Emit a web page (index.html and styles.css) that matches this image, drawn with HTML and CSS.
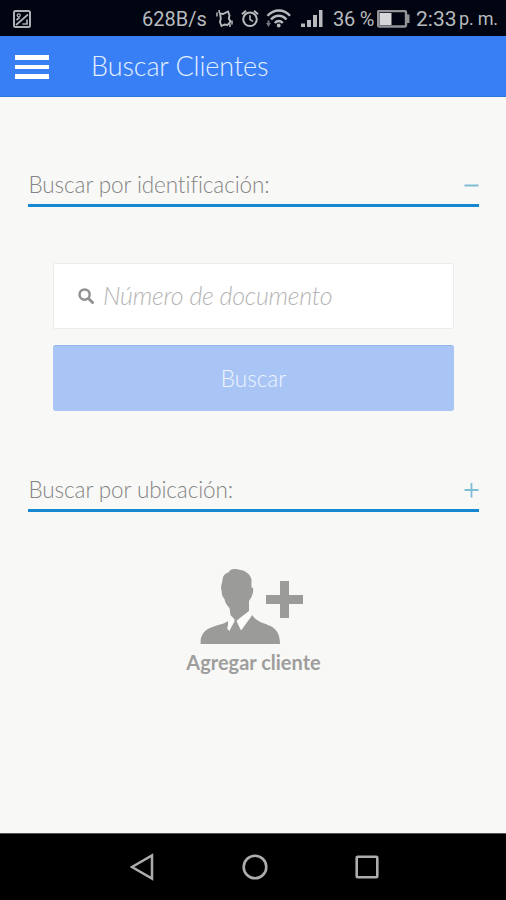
FILE: index.html
```
<!DOCTYPE html>
<html lang="es">
<head>
<meta charset="utf-8">
<title>Buscar Clientes</title>
<link rel="stylesheet" href="styles.css">
</head>
<body>
<div class="status">
  <svg class="shot" width="18" height="18" viewBox="0 0 18 18" fill="none" stroke="#aeb0b3" stroke-width="2"><rect x="1" y="1" width="16" height="16" rx="1.5"/><path d="M3 15 15 4.5M3.5 10l3-2.5M9.5 14H14V9.5" stroke-width="1.7"/><circle cx="5.7" cy="5.3" r="1.5" stroke-width="1.3"/></svg>
  <span class="speed">628B/s</span>
  <svg class="vibrate" width="17" height="19" viewBox="0 0 17 19" fill="none" stroke="#b8babd" stroke-width="1.9"><path d="M4 4.500 7 5l5-2.500 1.500 4-.7 3 1.700 3-3 3.500-3-.5-3 1.500-1.500-4 .8-3.500z"/><path d="M1 3.5v4M3.200 1v3M14 14.500v3.500M16 11.5v4" stroke-width="1.5"/></svg>
  <svg class="alarm" width="18" height="19" viewBox="0 0 18 19" fill="none" stroke="#b8babd" stroke-width="2"><circle cx="9" cy="10.3" r="6.8"/><path d="M1 5.2 5 1.8M17 5.2l-4-3.4"/><path d="M9 6.2v4.4l3 1.8" stroke-width="1.6"/></svg>
  <svg class="wifi" width="25" height="19" viewBox="0 0 25 19" fill="none" stroke="#b8babd" stroke-width="2.4"><path d="M1.5 6.8C8-.2 18-.2 24 6.8M5 10.5c4.5-5 11-5 15.5 0M8.8 14c2.4-2.7 5.6-2.7 8 0"/><circle cx="12.7" cy="16.5" r="1.9" fill="#b8babd" stroke="none"/><path d="M0 14h5l-2.5 4z" fill="#75777a" stroke="none"/><path d="M2.5 11.5V15" stroke="#75777a" stroke-width="2"/></svg>
  <svg class="signal" width="22" height="18" viewBox="0 0 22 18" fill="#b8babd"><path d="M0 13.5h4V17H0zM6 10h4v7H6zM12 5h4v12h-4zM18 0h3.5v17H18z"/></svg>
  <span class="percent">36 %</span>
  <svg class="battery" width="33" height="18" viewBox="0 0 33 18"><rect x="1" y="1" width="28" height="15.5" rx="1.5" fill="none" stroke="#929496" stroke-width="2.4"/><path d="M30 4.5h2.5v8.5H30z" fill="#929496"/><path d="M2.5 3h12v12h-12z" fill="#d5d6d7"/></svg>
  <span class="time">2:33</span><span class="ampm">p. m.</span>
</div>
<header class="header">
  <div class="menu"><i></i><i></i><i></i></div>
  <h1>Buscar Clientes</h1>
</header>
<main class="content">
  <div class="section">
    <span class="label-id">Buscar por identificación:</span>
    <svg class="toggle" width="15" height="16" viewBox="0 0 15 16" stroke="#7fbdd5" stroke-width="2"><path d="M.5 8.500h14"/></svg>
  </div>
  <div class="form">
    <div class="field">
      <svg width="16" height="16" viewBox="0 0 16 16" fill="none" stroke="#929292"><circle cx="6.6" cy="6.6" r="5.1" stroke-width="2.5"/><path d="m10.5 10.5 4 4" stroke-width="3" stroke-linecap="round"/></svg>
      <span class="placeholder">Número de documento</span>
    </div>
    <div class="button"><span>Buscar</span></div>
  </div>
  <div class="section">
    <span class="label-loc">Buscar por ubicación:</span>
    <svg class="toggle" width="15" height="16" viewBox="0 0 15 16" stroke="#7fbdd5" stroke-width="1.8"><path d="M.5 8h14M7.5 1v14.5"/></svg>
  </div>
  <div class="add">
    <svg width="104" height="77" viewBox="0 0 104 77" fill="#9b9b9a"><path d="M22 15 23 9c2-4 4-4 6-5 1-3 4-3 7-3l7 1.500c5 2 7.500 5 8.500 9v8c2 0 2 2 1.500 5L51.500 29 49 33V43L36 53l-5.500-6-1-7C27 37 25 35 24.500 31c-2-2-3-5-2.800-8-1-2-.7-5 .3-8z"/><path d="M.7 76C0 69 3 64 8 61c7-4 14-4 20.500-8l-1 8 2 2L34 53h4l3 9 11-15c5 7 12.500 8 18.500 11 6 3 9.500 8 9.500 18z"/><path d="M30 60l4-8 3-1 5 12-4 5h-7z"/><path d="M28.500 53l5.500-1.500.5 2-5 9-2-1.500zM49.500 43.500l2 4.500L41 62.500 36.500 53z" fill="#fbfbf9"/><path d="M80 13h9v14h14v9H89v14h-9V36H66v-9h14z"/></svg>
    <span>Agregar cliente</span>
  </div>
</main>
<nav class="nav">
  <svg width="24" height="28" viewBox="0 0 24 28" fill="none" stroke="#adadad" stroke-width="2.5"><path d="M22 2.5v23L2 14z"/></svg>
  <svg width="26" height="28" viewBox="0 0 26 28" fill="none" stroke="#adadad" stroke-width="2.6"><circle cx="13" cy="14" r="11.3"/></svg>
  <svg width="24" height="28" viewBox="0 0 24 28" fill="none" stroke="#adadad" stroke-width="2.6"><rect x="1.7" y="3.7" width="20.6" height="20.6" rx="1"/></svg>
</nav>
</body>
</html>
```
FILE: styles.css
```
* { box-sizing: border-box; }
body {
  margin: 0;
  width: 506px;
  height: 900px;
  display: flex;
  flex-direction: column;
  background: #f8f8f6;
  font-family: Lato, sans-serif;
  white-space: nowrap;
  overflow: hidden;
}
svg { display: block; flex: none; }
.status {
  height: 36px;
  flex: none;
  display: flex;
  align-items: center;
  background: #010512;
  color: #b8babd;
  font: 20px/36px Roboto, sans-serif;
  padding: 1px 0 0 13px;
}
.shot { margin-right: 111px; }
.speed { width: 74px; }
.vibrate { margin-right: 8px; }
.alarm { margin-right: 7px; }
.wifi { margin-right: 10px; }
.signal { margin-right: 10px; }
.percent { width: 44px; letter-spacing: -.2px; }
.battery { margin-right: 6px; }
.time { width: 43px; font-size: 21px; }
.ampm { font-size: 18px; letter-spacing: -.2px; }
.header {
  height: 61px;
  flex: none;
  display: flex;
  align-items: flex-start;
  background: #387ef5;
  border-bottom: 1px solid #2c78dc;
}
.menu {
  width: 34px;
  margin: 19px 42px 0 15px;
  display: grid;
  gap: 5px;
}
.menu i { height: 4.5px; background: #fff; }
h1 {
  margin: 0;
  color: #e3f0ff;
  font-size: 27px;
  font-weight: 300;
  letter-spacing: -.1px;
  line-height: 60px;
}
.content { flex: 1; padding: 0 27px 0 28px; }
.section {
  height: 41px;
  margin-top: 69px;
  display: flex;
  justify-content: space-between;
  align-items: flex-start;
  border-bottom: 3px solid #1688d2;
  color: #848484;
  font-size: 22.5px;
  font-weight: 300;
  line-height: 38px;
}
.label-id { letter-spacing: -.1px; padding-left: .5px; }
.label-loc { letter-spacing: -.1px; padding-left: .5px; }
.toggle { margin-top: 11px; }
.form { margin: 56px 25px 0; }
.field {
  height: 66px;
  display: flex;
  align-items: center;
  padding: 0 0 0 24px;
  gap: 9px;
  background: #fff;
  border: 1px solid #ececea;
  border-radius: 2px;
}
.placeholder {
  color: #b5b5b5;
  font-size: 25px;
  font-style: italic;
  font-weight: 300;
  letter-spacing: -.25px;
  padding-bottom: 2px;
}
.button {
  height: 66px;
  margin-top: 16px;
  display: flex;
  align-items: center;
  justify-content: center;
  padding-bottom: 1px;
  background: #a9c5f5;
  border-top: 1px solid #91b6ee;
  border-radius: 3px;
  color: #eef5ff;
  font-size: 22.5px;
  font-weight: 300;
}
.form + .section { margin-top: 60px; }
.add {
  display: flex;
  flex-direction: column;
  align-items: center;
  margin-top: 56px;
  color: #9e9e9d;
  font-size: 20px;
  font-weight: 700;
  line-height: 34px;
}
.add svg { margin-right: 3px; }
.nav {
  height: 67px;
  flex: none;
  display: flex;
  align-items: center;
  padding-left: 130px;
  background: #000;
  border-top: 1px solid #555;
}
.nav svg { margin-right: 87.5px; }
```
